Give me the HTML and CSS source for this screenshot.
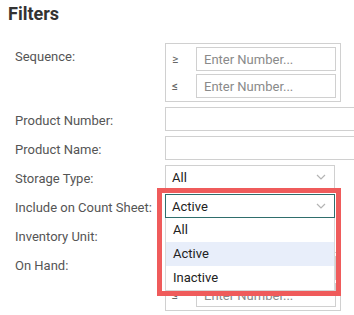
FILE: index.html
```html
<!DOCTYPE html>
<html lang="en">
<head>
    <meta charset="UTF-8">
    <title>Filters</title>
    <link rel="stylesheet" href="styles.css">
</head>
<body>

<h2 class="title">Filters</h2>

<div class="filters">
    <label class="filter-label">Sequence:</label>
    <div class="range">
        <div class="range-row">
            <span class="sym">&ge;</span>
            <input class="range-input" type="text" placeholder="Enter Number...">
        </div>
        <div class="range-row">
            <span class="sym">&le;</span>
            <input class="range-input" type="text" placeholder="Enter Number...">
        </div>
    </div>

    <label class="filter-label">Product Number:</label>
    <input class="text-input" type="text">

    <label class="filter-label">Product Name:</label>
    <input class="text-input" type="text">

    <label class="filter-label">Storage Type:</label>
    <div class="select">
        <span>All</span>
        <svg class="chevron" width="10" height="6" viewBox="0 0 10 6"><polyline points="1,1 5,5 9,1" fill="none" stroke="#b4b4b4" stroke-width="1.2"/></svg>
    </div>

    <label class="filter-label">Include on Count Sheet:</label>
    <div class="select-wrap">
        <div class="select focused">
            <span>Active</span>
            <svg class="chevron" width="10" height="6" viewBox="0 0 10 6"><polyline points="1,1 5,5 9,1" fill="none" stroke="#b4b4b4" stroke-width="1.2"/></svg>
        </div>
        <ul class="dropdown">
            <li>All</li>
            <li class="hover">Active</li>
            <li>Inactive</li>
        </ul>
        <div class="highlight"></div>
    </div>

    <label class="filter-label">Inventory Unit:</label>
    <div class="select">
        <span>All</span>
    </div>

    <label class="filter-label">On Hand:</label>
    <div class="range">
        <div class="range-row">
            <span class="sym">&ge;</span>
            <input class="range-input" type="text" placeholder="Enter Number...">
        </div>
        <div class="range-row">
            <span class="sym">&le;</span>
            <input class="range-input" type="text" placeholder="Enter Number...">
        </div>
    </div>
</div>

</body>
</html>
```

FILE: styles.css
```css
html, body {
    overflow: hidden;
}
body {
    font-family: Roboto, "Liberation Sans", sans-serif;
    margin: 0;
    padding: 0;
    background-color: #fff;
    color: #222;
    font-size: 13px;
}
.title {
    margin: 0;
    padding: 3px 0 0 8px;
    font-size: 18px;
    font-weight: 700;
    color: #333;
    line-height: 22px;
}
.filters {
    display: grid;
    grid-template-columns: 150px auto;
    row-gap: 5px;
    margin-top: 18px;
    padding-left: 15px;
}
.filter-label {
    color: #555;
    height: 24px;
    box-sizing: border-box;
    line-height: 22px;
    padding-top: 3px;
}

/* range boxes */
.range {
    width: 176px;
    box-sizing: border-box;
    border: 1px solid #d0d0d0;
    padding: 3px 4px 3px 6px;
    display: flex;
    flex-direction: column;
    gap: 3px;
}
.range-row {
    display: flex;
    align-items: center;
}
.sym {
    width: 24px;
    color: #666;
    font-size: 12px;
}
.range-input {
    width: 140px;
    height: 24px;
    box-sizing: border-box;
    border: 1px solid #d0d0d0;
    padding: 0 7px;
    font-family: inherit;
    font-size: 13px;
    margin: 0;
}
.range-input::placeholder {
    color: #8a8a8a;
}
.text-input {
    width: 200px;
    height: 24px;
    box-sizing: border-box;
    border: 1px solid #d0d0d0;
    margin: 0;
}

/* selects */
.select {
    width: 170px;
    height: 24px;
    box-sizing: border-box;
    border: 1px solid #d0d0d0;
    display: flex;
    align-items: center;
    justify-content: space-between;
    padding: 0 8px 0 6px;
    background: #fff;
}
.select.focused {
    border-color: #2f6e6c;
}
.chevron {
    display: block;
}
.select-wrap {
    position: relative;
}
.dropdown {
    position: absolute;
    top: 24px;
    left: 0;
    width: 170px;
    box-sizing: border-box;
    margin: 0;
    padding: 0;
    list-style: none;
    background: #fff;
    border: 1px solid #d8d8d8;
    border-top: none;
    z-index: 2;
}
.dropdown li {
    height: 24px;
    line-height: 24px;
    padding-left: 7px;
}
.dropdown li.hover {
    background-color: #e8eefa;
}
.highlight {
    position: absolute;
    top: -6px;
    left: -8px;
    width: 184px;
    height: 108px;
    box-sizing: border-box;
    border: 5px solid #ef5b5b;
    z-index: 3;
}
```
